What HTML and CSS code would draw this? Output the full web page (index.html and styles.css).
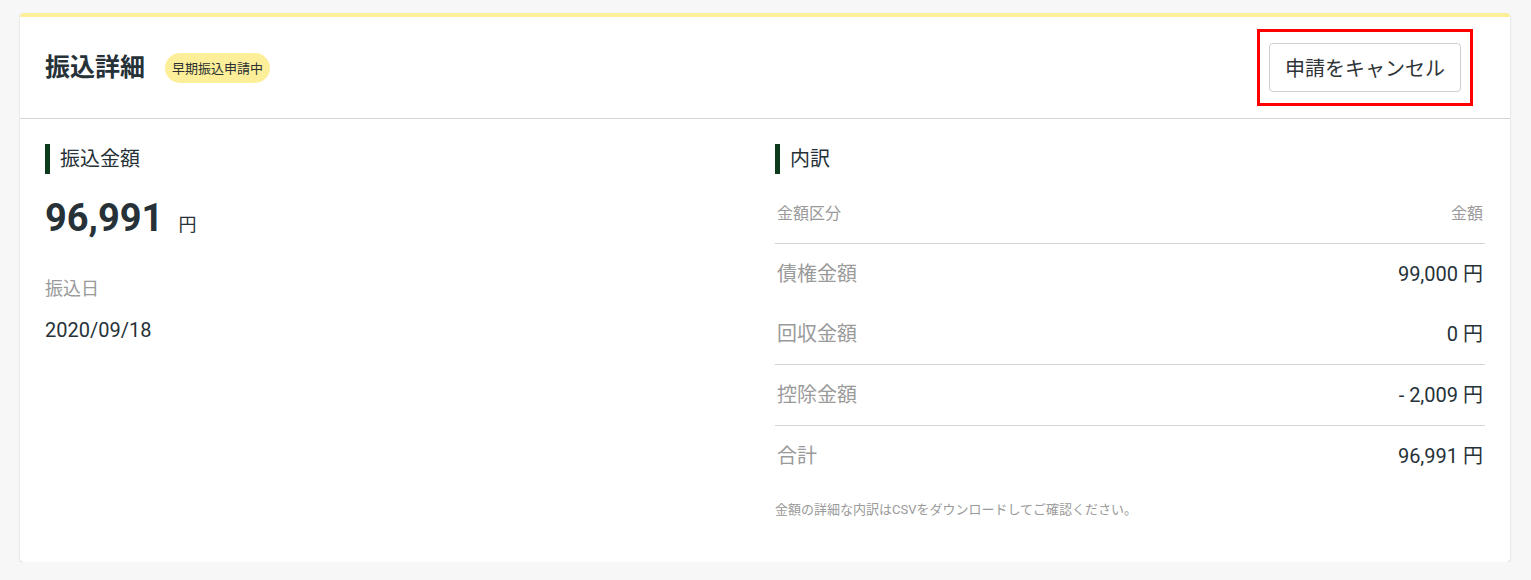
FILE: index.html
```html
<!DOCTYPE html>
<html lang="ja">
<head>
<meta charset="utf-8">
<title>振込詳細</title>
<link rel="stylesheet" href="styles.css">
</head>
<body>
  <section class="card">
    <header class="card-header">
      <div class="title-group">
        <h1 class="card-title">振込詳細</h1>
        <span class="badge">早期振込申請中</span>
      </div>
      <div class="highlight">
        <button class="btn" type="button">申請をキャンセル</button>
      </div>
    </header>

    <div class="card-body">
      <div class="column">
        <h2 class="section-title">振込金額</h2>
        <p class="amount"><span class="amount-value">96,991</span><span class="amount-unit">円</span></p>
        <p class="field-label">振込日</p>
        <p class="field-value">2020/09/18</p>
      </div>

      <div class="column">
        <h2 class="section-title">内訳</h2>
        <div class="breakdown">
          <div class="row row-head row-divider">
            <span>金額区分</span>
            <span>金額</span>
          </div>
          <div class="row">
            <span class="row-label">債権金額</span>
            <span class="row-value">99,000 円</span>
          </div>
          <div class="row row-divider">
            <span class="row-label">回収金額</span>
            <span class="row-value">0 円</span>
          </div>
          <div class="row row-divider">
            <span class="row-label">控除金額</span>
            <span class="row-value">- 2,009 円</span>
          </div>
          <div class="row">
            <span class="row-label">合計</span>
            <span class="row-value">96,991 円</span>
          </div>
        </div>
        <p class="note">金額の詳細な内訳はCSVをダウンロードしてご確認ください。</p>
      </div>
    </div>
  </section>
</body>
</html>
```

FILE: styles.css
```css
* {
  box-sizing: border-box;
}

body {
  margin: 0;
  background: #f7f7f7;
  font-family: "Roboto", "Noto Sans CJK JP", sans-serif;
  color: #263238;
}

h1, h2, p {
  margin: 0;
  font-weight: normal;
}

.card {
  margin: 13px 21px 0 20px;
  background: #fff;
  border-top: 4px solid #fdef9a;
  border-radius: 4px;
  box-shadow: 0 1px 2px rgba(0, 0, 0, 0.18);
}

/* header */
.card-header {
  display: flex;
  align-items: center;
  justify-content: space-between;
  padding: 12px 37px 12px 25px;
  border-bottom: 1px solid #d4d4d4;
}

.title-group {
  display: flex;
  align-items: center;
  gap: 20px;
}

.card-title {
  font-size: 25px;
  font-weight: bold;
  line-height: 32px;
}

.badge {
  display: inline-flex;
  align-items: center;
  height: 30px;
  padding: 0 7px;
  border-radius: 15px;
  background: #fdef9a;
  font-size: 13px;
  color: #2a2f33;
}

.highlight {
  border: 3px solid #ff0000;
  padding: 11px 9px;
}

.btn {
  display: block;
  width: 192px;
  height: 49px;
  border: 1px solid #cfcfcf;
  border-radius: 4px;
  background: #fff;
  font-family: inherit;
  font-size: 20px;
  color: #2f3437;
  padding: 0;
}

/* body */
.card-body {
  display: grid;
  grid-template-columns: 1fr 1fr;
  gap: 20px;
  padding: 25px 25px 42px;
}

.section-title {
  height: 30px;
  line-height: 30px;
  border-left: 5px solid #0c3a1d;
  padding-left: 10px;
  font-size: 20px;
}

.amount {
  margin-top: 20px;
  line-height: 48px;
}

.amount-value {
  font-size: 38px;
  font-weight: bold;
}

.amount-unit {
  font-size: 18px;
  margin-left: 15px;
}

.field-label {
  margin-top: 25px;
  font-size: 18px;
  line-height: 28px;
  color: #9a9a9a;
}

.field-value {
  margin-top: 13px;
  font-size: 20px;
  line-height: 28px;
}

/* breakdown table */
.breakdown {
  margin-top: 9px;
}

.row {
  display: flex;
  align-items: center;
  justify-content: space-between;
  height: 60px;
  padding: 0 2px 4px;
  font-size: 20px;
}

.row-divider {
  height: 61px;
  border-bottom: 1px solid #d4d4d4;
}

.row-head {
  padding-bottom: 2px;
  font-size: 16px;
  color: #9a9a9a;
}

.row-label {
  color: #9a9a9a;
}

.row-value {
  color: #263238;
}

.note {
  margin-top: 14px;
  font-size: 13px;
  line-height: 20px;
  color: #9a9a9a;
}
```
